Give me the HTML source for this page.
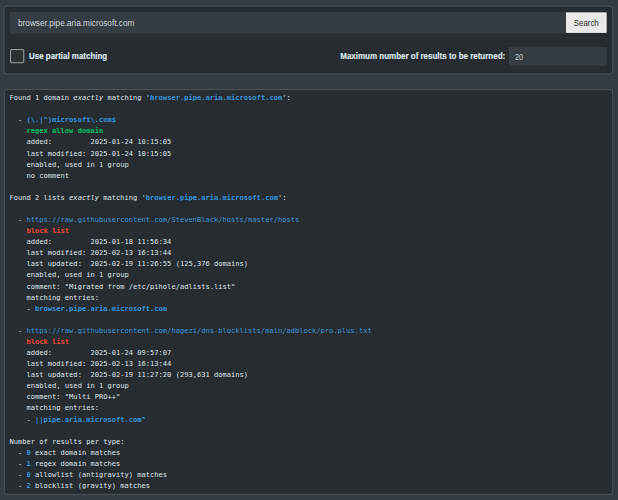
<!DOCTYPE html>
<html><head><meta charset="utf-8">
<style>
html,body{margin:0;padding:0;}
body{width:618px;height:500px;overflow:hidden;background:#353c42;color:#bec5cb;font-family:"Liberation Sans",sans-serif;position:relative;}
svg.bg{position:absolute;left:0;top:0;}
.t{position:absolute;white-space:nowrap;}
.inp{left:18.4px;top:12px;font-size:9.7px;line-height:21px;color:#d0d6db;transform:translateY(0.3px) scaleX(0.851);transform-origin:0 50%;}
.btn{left:566px;top:12.5px;width:40.5px;text-align:center;font-size:8.8px;line-height:20.5px;color:#2c2c2c;transform:scaleX(0.89);transform-origin:50% 50%;margin-top:0.5px;}
.lbl{left:28.8px;top:49px;font-size:9.3px;font-weight:bold;-webkit-text-stroke:0.2px #dde2e6;line-height:14px;color:#dde2e6;transform:scaleX(0.855);transform-origin:0 50%;}
.lbl2{right:113.2px;top:49px;font-size:9.3px;font-weight:bold;-webkit-text-stroke:0.2px #dde2e6;line-height:14px;color:#dde2e6;transform:scaleX(0.858);transform-origin:100% 50%;}
.num{left:515px;top:47px;font-size:8.2px;line-height:21px;color:#c6ccd2;transform:scaleX(0.9);transform-origin:0 50%;}
.pre{position:absolute;left:5px;top:90px;width:1212px;height:810px;font-family:"DejaVu Sans Mono","Liberation Mono",monospace;font-size:14.17px;line-height:22px;color:#dfe4e8;transform:scale(0.5);transform-origin:0 0;}
.ln{position:absolute;left:8.9px;white-space:pre;height:22px;}
.b{color:#3d96d6;} .bb{color:#3594dc;font-weight:bold;} .g{color:#00c062;font-weight:bold;} .r{color:#ee4630;font-weight:bold;}
</style></head><body>
<svg class="bg" width="618" height="500" viewBox="0 0 618 500" xmlns="http://www.w3.org/2000/svg">
<rect x="4.1" y="6" width="608.7" height="68.1" rx="3.8" fill="#272c30" stroke="#4e555b" stroke-width="1"/>
<rect x="10" y="11.9" width="557" height="21.8" fill="#353c42"/>
<rect x="566.6" y="12.9" width="39.5" height="19.4" fill="#e8e8e8" stroke="#ffffff" stroke-width="0.9"/>
<rect x="10.55" y="49.55" width="13.2" height="13.2" rx="0.6" fill="#2b3035" stroke="#c4c4bc" stroke-width="0.8"/>
<rect x="509" y="47" width="97.9" height="18.7" fill="#353c42"/>
<rect x="4.3" y="89.6" width="608.3" height="404.7" rx="2.5" fill="#272c30" stroke="#4c5359" stroke-width="1"/>
</svg>
<div class="t inp">browser.pipe.aria.microsoft.com</div>
<div class="t btn">Search</div>
<div class="t lbl">Use partial matching</div>
<div class="t lbl2">Maximum number of results to be returned:</div>
<div class="t num">20</div>
<div class="pre">
<div class="ln" style="top:4px">Found 1 domain <i>exactly</i> matching '<span class="bb">browser.pipe.aria.microsoft.com</span>':</div>
<div class="ln" style="top:48px">  - <span class="bb">(\.|^)microsoft\.com$</span></div>
<div class="ln" style="top:70px">    <span class="g">regex allow domain</span></div>
<div class="ln" style="top:92px">    added:         2025-01-24 10:15:05</div>
<div class="ln" style="top:116px">    last modified: 2025-01-24 10:15:05</div>
<div class="ln" style="top:138px">    enabled, used in 1 group</div>
<div class="ln" style="top:160px">    no comment</div>
<div class="ln" style="top:204px">Found 2 lists <i>exactly</i> matching '<span class="bb">browser.pipe.aria.microsoft.com</span>':</div>
<div class="ln" style="top:248px">  - <span class="b">https://raw.githubusercontent.com/StevenBlack/hosts/master/hosts</span></div>
<div class="ln" style="top:270px">    <span class="r">block list</span></div>
<div class="ln" style="top:292px">    added:         2025-01-18 11:56:34</div>
<div class="ln" style="top:314px">    last modified: 2025-02-13 16:13:44</div>
<div class="ln" style="top:336px">    last updated:  2025-02-19 11:26:55 (125,376 domains)</div>
<div class="ln" style="top:358px">    enabled, used in 1 group</div>
<div class="ln" style="top:382px">    comment: "Migrated from /etc/pihole/adlists.list"</div>
<div class="ln" style="top:404px">    matching entries:</div>
<div class="ln" style="top:426px">    - <span class="bb">browser.pipe.aria.microsoft.com</span></div>
<div class="ln" style="top:470px">  - <span class="b">https://raw.githubusercontent.com/hagezi/dns-blocklists/main/adblock/pro.plus.txt</span></div>
<div class="ln" style="top:492px">    <span class="r">block list</span></div>
<div class="ln" style="top:514px">    added:         2025-01-24 09:57:07</div>
<div class="ln" style="top:536px">    last modified: 2025-02-13 16:13:44</div>
<div class="ln" style="top:558px">    last updated:  2025-02-19 11:27:20 (293,631 domains)</div>
<div class="ln" style="top:580px">    enabled, used in 1 group</div>
<div class="ln" style="top:602px">    comment: "Multi PRO++"</div>
<div class="ln" style="top:624px">    matching entries:</div>
<div class="ln" style="top:648px">    - <span class="bb">||pipe.aria.microsoft.com^</span></div>
<div class="ln" style="top:692px">Number of results per type:</div>
<div class="ln" style="top:714px">  - <span class="bb">0</span> exact domain matches</div>
<div class="ln" style="top:736px">  - <span class="bb">1</span> regex domain matches</div>
<div class="ln" style="top:758px">  - <span class="bb">0</span> allowlist (antigravity) matches</div>
<div class="ln" style="top:780px">  - <span class="bb">2</span> blocklist (gravity) matches</div>
</div>
</body></html>
